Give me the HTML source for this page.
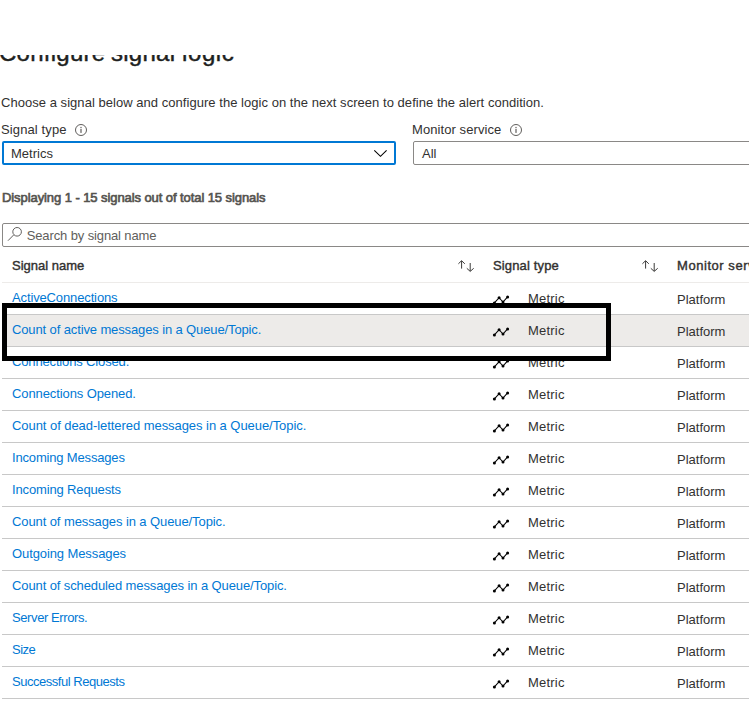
<!DOCTYPE html>
<html><head><meta charset="utf-8">
<style>
html,body{margin:0;padding:0;background:#fff;}
body{width:749px;height:704px;overflow:hidden;position:relative;font-family:"Liberation Sans",sans-serif;color:#323130;font-size:13px;}
.a{position:absolute;white-space:nowrap;line-height:15px;}
.hclip{position:absolute;left:0;top:55px;width:749px;height:20px;overflow:hidden;}
.hw{position:absolute;top:-16px;font-size:24px;font-weight:normal;line-height:28px;-webkit-text-stroke:0.45px #201f1e;letter-spacing:0.25px;color:#201f1e;white-space:nowrap;}
.sb{-webkit-text-stroke:0.4px #323130;}
.dd{position:absolute;box-sizing:border-box;}
.line{position:absolute;left:2px;width:760px;height:1px;background:#c8c8c8;}
.name{position:absolute;left:12px;color:#0078d4;white-space:nowrap;line-height:15px;}
.typ{position:absolute;left:528px;letter-spacing:0.2px;white-space:nowrap;line-height:15px;}
.plat{position:absolute;left:677px;white-space:nowrap;line-height:15px;}
.ico{position:absolute;left:492px;width:18px;height:10px;}
</style></head><body>

<div class="hclip">
  <span class="hw" style="left:-1px">Configure</span>
  <span class="hw" style="left:111px">signal</span>
  <span class="hw" style="left:182px;letter-spacing:0.6px">logic</span>
</div>

<div class="a" style="left:1px;top:95px;letter-spacing:0.04px">Choose a signal below and configure the logic on the next screen to define the alert condition.</div>

<div class="a" style="left:1px;top:122px;letter-spacing:0.12px">Signal type</div>
<svg style="position:absolute;left:75px;top:124px" width="12" height="12" viewBox="0 0 12 12"><circle cx="6" cy="6" r="5.5" fill="none" stroke="#605e5c" stroke-width="1"/><rect x="5.4" y="2.9" width="1.2" height="1.2" fill="#605e5c"/><rect x="5.4" y="4.9" width="1.2" height="4" fill="#605e5c"/></svg>
<div class="dd" style="left:2px;top:141px;width:394px;height:24px;border:2px solid #0078d4;border-radius:2px;"></div>
<div class="a" style="left:11px;top:146px">Metrics</div>
<svg style="position:absolute;left:372px;top:148px" width="17" height="11" viewBox="0 0 17 11"><path d="M2.3 2.3 L8.5 8.3 L14.6 2.3" fill="none" stroke="#000" stroke-width="1.1"/></svg>

<div class="a" style="left:412px;top:122px;letter-spacing:0.08px">Monitor service</div>
<svg style="position:absolute;left:510px;top:124px" width="12" height="12" viewBox="0 0 12 12"><circle cx="6" cy="6" r="5.5" fill="none" stroke="#605e5c" stroke-width="1"/><rect x="5.4" y="2.9" width="1.2" height="1.2" fill="#605e5c"/><rect x="5.4" y="4.9" width="1.2" height="4" fill="#605e5c"/></svg>
<div class="dd" style="left:413px;top:141px;width:400px;height:24px;border:1px solid #8a8886;border-radius:2px;"></div>
<div class="a" style="left:422px;top:146px">All</div>

<div class="a sb" style="left:2px;top:190px;color:#55534f;-webkit-text-stroke:0.65px #55534f;letter-spacing:-0.08px">Displaying 1 - 15 signals out of total 15 signals</div>

<div class="dd" style="left:2px;top:223px;width:800px;height:24px;border:1px solid #8a8886;border-radius:2px;"></div>
<svg style="position:absolute;left:4px;top:224px" width="22" height="22" viewBox="0 0 22 22"><circle cx="13.1" cy="7.8" r="4.3" fill="none" stroke="#605e5c" stroke-width="1"/><path d="M4 16.7 L9.6 11" stroke="#605e5c" stroke-width="1"/></svg>
<div class="a" style="left:26.7px;top:228px;color:#605e5c;letter-spacing:-0.12px">Search by signal name</div>

<div class="a sb" style="left:12px;top:258px">Signal name</div>
<div class="a sb" style="left:493px;top:258px;letter-spacing:0.15px">Signal type</div>
<div class="a sb" style="left:677px;top:258px;letter-spacing:0.55px">Monitor service</div>
<svg style="position:absolute;left:455px;top:258px" width="22" height="16" viewBox="0 0 22 16"><path d="M6.6 3 V10.6 M3.4 5.8 L6.6 2.7 L9.8 5.8 M15.2 5 V13.1 M11.8 10.3 L15.2 13.4 L18.7 10.3" fill="none" stroke="#3b3a39" stroke-width="1"/></svg>
<svg style="position:absolute;left:639px;top:258px" width="22" height="16" viewBox="0 0 22 16"><path d="M6.6 3 V10.6 M3.4 5.8 L6.6 2.7 L9.8 5.8 M15.2 5 V13.1 M11.8 10.3 L15.2 13.4 L18.7 10.3" fill="none" stroke="#3b3a39" stroke-width="1"/></svg>

<div class="line" style="top:282px;background:#edebe9"></div>

<div class="line" style="top:314px"></div>
<div class="name" style="top:290px;letter-spacing:-0.131px">ActiveConnections</div>
<svg class="ico" style="top:295px" viewBox="0 0 18 10"><path d="M2.4 7.9 L7.1 2.7 L11 7 L15.6 1.9" fill="none" stroke="#000" stroke-width="1.1"/><circle cx="2.4" cy="7.9" r="1.5"/><circle cx="7.1" cy="2.7" r="1.5"/><circle cx="11" cy="7" r="1.5"/><circle cx="15.6" cy="1.9" r="1.5"/></svg>
<div class="typ" style="top:291px">Metric</div>
<div class="plat" style="top:292px">Platform</div>
<div style="position:absolute;left:2px;top:315px;width:760px;height:31px;background:#edebe9"></div>
<div class="line" style="top:346px"></div>
<div class="name" style="top:322px;letter-spacing:-0.122px">Count of active messages in a Queue/Topic.</div>
<svg class="ico" style="top:327px" viewBox="0 0 18 10"><path d="M2.4 7.9 L7.1 2.7 L11 7 L15.6 1.9" fill="none" stroke="#000" stroke-width="1.1"/><circle cx="2.4" cy="7.9" r="1.5"/><circle cx="7.1" cy="2.7" r="1.5"/><circle cx="11" cy="7" r="1.5"/><circle cx="15.6" cy="1.9" r="1.5"/></svg>
<div class="typ" style="top:323px">Metric</div>
<div class="plat" style="top:324px">Platform</div>
<div class="line" style="top:378px"></div>
<div class="name" style="top:354px;letter-spacing:-0.15px">Connections Closed.</div>
<svg class="ico" style="top:359px" viewBox="0 0 18 10"><path d="M2.4 7.9 L7.1 2.7 L11 7 L15.6 1.9" fill="none" stroke="#000" stroke-width="1.1"/><circle cx="2.4" cy="7.9" r="1.5"/><circle cx="7.1" cy="2.7" r="1.5"/><circle cx="11" cy="7" r="1.5"/><circle cx="15.6" cy="1.9" r="1.5"/></svg>
<div class="typ" style="top:355px">Metric</div>
<div class="plat" style="top:356px">Platform</div>
<div class="line" style="top:410px"></div>
<div class="name" style="top:386px;letter-spacing:-0.1px">Connections Opened.</div>
<svg class="ico" style="top:391px" viewBox="0 0 18 10"><path d="M2.4 7.9 L7.1 2.7 L11 7 L15.6 1.9" fill="none" stroke="#000" stroke-width="1.1"/><circle cx="2.4" cy="7.9" r="1.5"/><circle cx="7.1" cy="2.7" r="1.5"/><circle cx="11" cy="7" r="1.5"/><circle cx="15.6" cy="1.9" r="1.5"/></svg>
<div class="typ" style="top:387px">Metric</div>
<div class="plat" style="top:388px">Platform</div>
<div class="line" style="top:442px"></div>
<div class="name" style="top:418px;letter-spacing:-0.056px">Count of dead-lettered messages in a Queue/Topic.</div>
<svg class="ico" style="top:423px" viewBox="0 0 18 10"><path d="M2.4 7.9 L7.1 2.7 L11 7 L15.6 1.9" fill="none" stroke="#000" stroke-width="1.1"/><circle cx="2.4" cy="7.9" r="1.5"/><circle cx="7.1" cy="2.7" r="1.5"/><circle cx="11" cy="7" r="1.5"/><circle cx="15.6" cy="1.9" r="1.5"/></svg>
<div class="typ" style="top:419px">Metric</div>
<div class="plat" style="top:420px">Platform</div>
<div class="line" style="top:474px"></div>
<div class="name" style="top:450px;letter-spacing:-0.169px">Incoming Messages</div>
<svg class="ico" style="top:455px" viewBox="0 0 18 10"><path d="M2.4 7.9 L7.1 2.7 L11 7 L15.6 1.9" fill="none" stroke="#000" stroke-width="1.1"/><circle cx="2.4" cy="7.9" r="1.5"/><circle cx="7.1" cy="2.7" r="1.5"/><circle cx="11" cy="7" r="1.5"/><circle cx="15.6" cy="1.9" r="1.5"/></svg>
<div class="typ" style="top:451px">Metric</div>
<div class="plat" style="top:452px">Platform</div>
<div class="line" style="top:506px"></div>
<div class="name" style="top:482px;letter-spacing:-0.144px">Incoming Requests</div>
<svg class="ico" style="top:487px" viewBox="0 0 18 10"><path d="M2.4 7.9 L7.1 2.7 L11 7 L15.6 1.9" fill="none" stroke="#000" stroke-width="1.1"/><circle cx="2.4" cy="7.9" r="1.5"/><circle cx="7.1" cy="2.7" r="1.5"/><circle cx="11" cy="7" r="1.5"/><circle cx="15.6" cy="1.9" r="1.5"/></svg>
<div class="typ" style="top:483px">Metric</div>
<div class="plat" style="top:484px">Platform</div>
<div class="line" style="top:538px"></div>
<div class="name" style="top:514px;letter-spacing:-0.094px">Count of messages in a Queue/Topic.</div>
<svg class="ico" style="top:519px" viewBox="0 0 18 10"><path d="M2.4 7.9 L7.1 2.7 L11 7 L15.6 1.9" fill="none" stroke="#000" stroke-width="1.1"/><circle cx="2.4" cy="7.9" r="1.5"/><circle cx="7.1" cy="2.7" r="1.5"/><circle cx="11" cy="7" r="1.5"/><circle cx="15.6" cy="1.9" r="1.5"/></svg>
<div class="typ" style="top:515px">Metric</div>
<div class="plat" style="top:516px">Platform</div>
<div class="line" style="top:570px"></div>
<div class="name" style="top:546px;letter-spacing:-0.1px">Outgoing Messages</div>
<svg class="ico" style="top:551px" viewBox="0 0 18 10"><path d="M2.4 7.9 L7.1 2.7 L11 7 L15.6 1.9" fill="none" stroke="#000" stroke-width="1.1"/><circle cx="2.4" cy="7.9" r="1.5"/><circle cx="7.1" cy="2.7" r="1.5"/><circle cx="11" cy="7" r="1.5"/><circle cx="15.6" cy="1.9" r="1.5"/></svg>
<div class="typ" style="top:547px">Metric</div>
<div class="plat" style="top:548px">Platform</div>
<div class="line" style="top:602px"></div>
<div class="name" style="top:578px;letter-spacing:-0.107px">Count of scheduled messages in a Queue/Topic.</div>
<svg class="ico" style="top:583px" viewBox="0 0 18 10"><path d="M2.4 7.9 L7.1 2.7 L11 7 L15.6 1.9" fill="none" stroke="#000" stroke-width="1.1"/><circle cx="2.4" cy="7.9" r="1.5"/><circle cx="7.1" cy="2.7" r="1.5"/><circle cx="11" cy="7" r="1.5"/><circle cx="15.6" cy="1.9" r="1.5"/></svg>
<div class="typ" style="top:579px">Metric</div>
<div class="plat" style="top:580px">Platform</div>
<div class="line" style="top:634px"></div>
<div class="name" style="top:610px;letter-spacing:-0.4px">Server Errors.</div>
<svg class="ico" style="top:615px" viewBox="0 0 18 10"><path d="M2.4 7.9 L7.1 2.7 L11 7 L15.6 1.9" fill="none" stroke="#000" stroke-width="1.1"/><circle cx="2.4" cy="7.9" r="1.5"/><circle cx="7.1" cy="2.7" r="1.5"/><circle cx="11" cy="7" r="1.5"/><circle cx="15.6" cy="1.9" r="1.5"/></svg>
<div class="typ" style="top:611px">Metric</div>
<div class="plat" style="top:612px">Platform</div>
<div class="line" style="top:666px"></div>
<div class="name" style="top:642px;letter-spacing:-0.5px">Size</div>
<svg class="ico" style="top:647px" viewBox="0 0 18 10"><path d="M2.4 7.9 L7.1 2.7 L11 7 L15.6 1.9" fill="none" stroke="#000" stroke-width="1.1"/><circle cx="2.4" cy="7.9" r="1.5"/><circle cx="7.1" cy="2.7" r="1.5"/><circle cx="11" cy="7" r="1.5"/><circle cx="15.6" cy="1.9" r="1.5"/></svg>
<div class="typ" style="top:643px">Metric</div>
<div class="plat" style="top:644px">Platform</div>
<div class="line" style="top:698px"></div>
<div class="name" style="top:674px;letter-spacing:-0.472px">Successful Requests</div>
<svg class="ico" style="top:679px" viewBox="0 0 18 10"><path d="M2.4 7.9 L7.1 2.7 L11 7 L15.6 1.9" fill="none" stroke="#000" stroke-width="1.1"/><circle cx="2.4" cy="7.9" r="1.5"/><circle cx="7.1" cy="2.7" r="1.5"/><circle cx="11" cy="7" r="1.5"/><circle cx="15.6" cy="1.9" r="1.5"/></svg>
<div class="typ" style="top:675px">Metric</div>
<div class="plat" style="top:676px">Platform</div>

<div style="position:absolute;left:2px;top:303px;width:599px;height:48px;border:5px solid #000;"></div>
</body></html>
